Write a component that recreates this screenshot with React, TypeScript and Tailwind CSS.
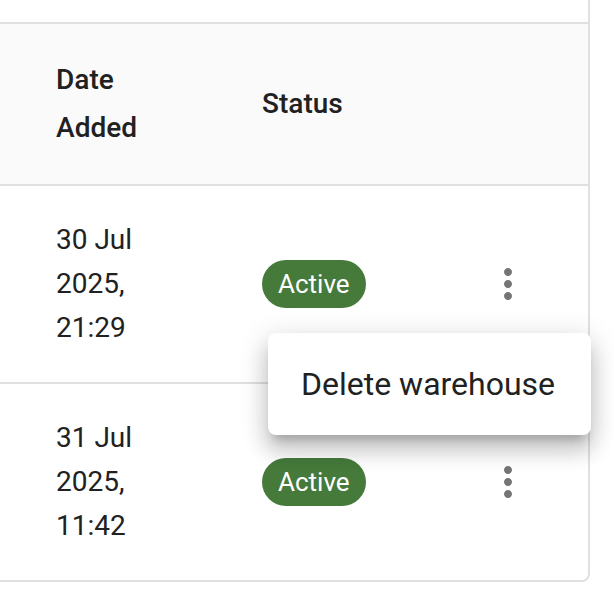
import { Fragment } from "react";

const rows = [
  { id: 1, date: ["30 Jul", "2025,", "21:29"], status: "Active" },
  { id: 2, date: ["31 Jul", "2025,", "11:42"], status: "Active" },
];

function MoreVertIcon() {
  return (
    <svg viewBox="0 0 24 24" className="h-[48px] w-[48px] fill-[#757575]">
      <path d="M12 8c1.1 0 2-.9 2-2s-.9-2-2-2-2 .9-2 2 .9 2 2 2zm0 2c-1.1 0-2 .9-2 2s.9 2 2 2 2-.9 2-2-.9-2-2-2zm0 6c-1.1 0-2 .9-2 2s.9 2 2 2 2-.9 2-2-.9-2-2-2z" />
    </svg>
  );
}

export default function App() {
  return (
    <div className="relative h-[596px] w-[614px] overflow-hidden bg-white font-['Roboto',sans-serif] text-[#212121]">
      <div className="w-[590px] rounded-br-[8px] border-r-2 border-b-2 border-[#e0e0e0]">
        <div className="h-[22px]" />
        <div className="grid grid-cols-[230px_200px_1fr] border-t-2 border-[#e0e0e0]">
          {/* header */}
          <div className="flex h-[162px] items-center border-b-2 border-[#e0e0e0] bg-[#fafafa] pl-[56px] font-['Roboto_Medium','Roboto',sans-serif] text-[28px] font-medium leading-[48px]">
            <span>
              Date
              <br />
              Added
            </span>
          </div>
          <div className="flex h-[162px] items-center border-b-2 border-[#e0e0e0] bg-[#fafafa] pl-[32px] font-['Roboto_Medium','Roboto',sans-serif] text-[28px] font-medium leading-[48px]">
            Status
          </div>
          <div className="h-[162px] border-b-2 border-[#e0e0e0] bg-[#fafafa]" />

          {rows.map((row, index) => (
            <Fragment key={row.id}>
              <div
                className={
                  index < rows.length - 1
                    ? "flex h-[198px] items-center border-b-2 border-[#e0e0e0] pl-[56px] text-[28px] leading-[44px]"
                    : "flex h-[196px] items-center pl-[56px] text-[28px] leading-[44px]"
                }
              >
                <span>
                  {row.date[0]}
                  <br />
                  {row.date[1]}
                  <br />
                  {row.date[2]}
                </span>
              </div>
              <div
                className={
                  index < rows.length - 1
                    ? "flex h-[198px] items-center border-b-2 border-[#e0e0e0] pl-[32px]"
                    : "flex h-[196px] items-center pl-[32px]"
                }
              >
                <span className="flex h-[48px] items-center rounded-full bg-[#457a3b] px-[16px] text-[26px] text-white">
                  {row.status}
                </span>
              </div>
              <div
                className={
                  index < rows.length - 1
                    ? "flex h-[198px] items-center border-b-2 border-[#e0e0e0] pl-[38px]"
                    : "flex h-[196px] items-center pl-[38px]"
                }
              >
                <button
                  type="button"
                  className="flex h-[80px] w-[80px] items-center justify-center rounded-full"
                >
                  <MoreVertIcon />
                </button>
              </div>
            </Fragment>
          ))}
        </div>
      </div>

      <div className="absolute top-[333px] left-[268px] flex h-[102px] w-[323px] items-center rounded-[8px] bg-white shadow-[0_10px_10px_-6px_rgba(0,0,0,0.2),0_16px_20px_2px_rgba(0,0,0,0.14),0_6px_28px_4px_rgba(0,0,0,0.12)]">
        <div className="px-[33px] text-[32px] leading-[48px]">Delete warehouse</div>
      </div>
    </div>
  );
}
